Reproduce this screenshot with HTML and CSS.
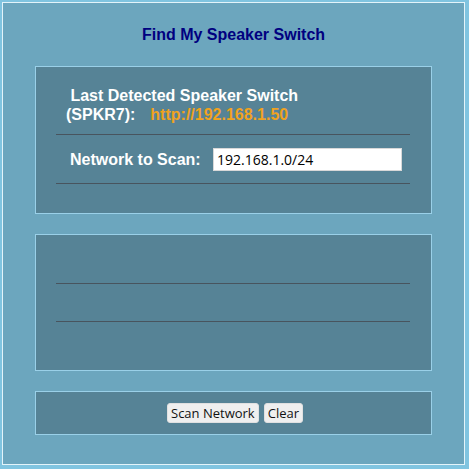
FILE: index.html
```html
<!DOCTYPE html>
<html>
<head>
<meta charset="utf-8">
<link rel="stylesheet" href="styles.css">
</head>
<body>
<div class="frame">
  <h1 class="title">Find My Speaker Switch</h1>
  <section class="panel panel-info">
    <div class="detected">
      <div class="line1">&nbsp;Last Detected Speaker Switch</div>
      <div class="line2"><span>(SPKR7):</span><a class="link" href="#">http://192.168.1.50</a></div>
    </div>
    <hr class="rule rule-a">
    <div class="scan-row">
      <label class="scan-label" for="net">Network to Scan:</label>
      <input id="net" class="scan-input" type="text" value="192.168.1.0/24">
    </div>
    <hr class="rule">
  </section>
  <section class="panel panel-results">
    <hr class="rule">
    <hr class="rule rule-b">
  </section>
  <section class="panel panel-actions">
    <button class="btn" type="button">Scan Network</button>
    <button class="btn" type="button">Clear</button>
  </section>
</div>
</body>
</html>
```
FILE: styles.css
```css
html, body {
  margin: 0;
  padding: 0;
}
body {
  background: #80c4e0;
  width: 469px;
  height: 469px;
  font-family: "Liberation Sans", Arial, sans-serif;
}
.frame {
  margin: 2px 0 0 2px;
  height: 461px;
  width: 397px;
  border: 1px solid #e4f4fa;
  background: #6ca6be;
  display: flex;
  flex-direction: column;
  padding: 0 32px;
  box-sizing: content-box;
}
.title {
  margin: 22px 0 22px 0;
  font-size: 16px;
  line-height: 19px;
  font-weight: bold;
  color: #000080;
  text-align: center;
}
.panel {
  background: #568396;
  border: 1px solid #9ad0e8;
  box-sizing: border-box;
  padding: 0 21px 0 20px;
}
.panel-info {
  height: 148px;
  padding-top: 19px;
}
.detected {
  padding-left: 10px;
  color: #ffffff;
  font-weight: bold;
  font-size: 16px;
  line-height: 19px;
}
.line2 {
  display: flex;
}
.link {
  color: #f0a21e;
  text-decoration: none;
  margin-left: 15px;
}
.rule {
  margin: 0;
  border: 0;
  border-top: 1px solid #48545e;
  height: 0;
}
.rule-a {
  margin-top: 10px;
}
.scan-row {
  display: flex;
  align-items: center;
  padding: 13px 0 12px 14px;
}
.scan-label {
  width: 143px;
  color: #ffffff;
  font-weight: bold;
  font-size: 16px;
  line-height: 19px;
}
.scan-input {
  box-sizing: border-box;
  width: 189px;
  height: 23px;
  margin: 0;
  border: 1px solid #d8d8d8;
  background: #ffffff;
  padding: 0 3px;
  font-family: "Open Sans", "Noto Sans", sans-serif;
  font-size: 14px;
  color: #000000;
}
.panel-results {
  margin-top: 20px;
  height: 137px;
  padding-top: 48px;
}
.rule-b {
  margin-top: 37px;
}
.panel-actions {
  margin-top: 20px;
  height: 44px;
  display: flex;
  align-items: center;
  justify-content: center;
  gap: 5px;
  padding: 0 0 0 3px;
}
.btn {
  margin: 0;
  height: 20px;
  padding: 0 3px;
  border: 1px solid #e0e0e0;
  border-radius: 3px;
  background: #efefef;
  font-family: "Open Sans", "Noto Sans", sans-serif;
  font-size: 13px;
  line-height: 18px;
  color: #111111;
}
```
